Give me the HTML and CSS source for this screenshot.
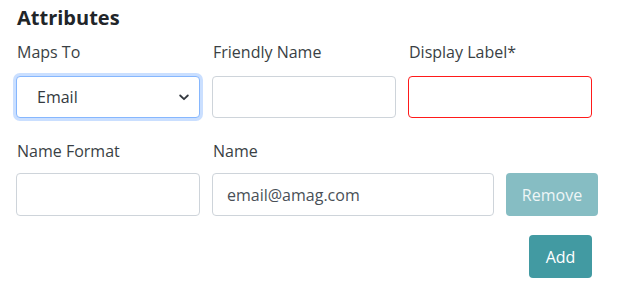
FILE: index.html
```html
<!DOCTYPE html>
<html lang="en">
<head>
  <meta charset="UTF-8">
  <title>Attributes</title>
  <link rel="stylesheet" href="styles.css">
</head>
<body>
  <div class="attributes">
    <h2 class="title">Attributes</h2>
    <div class="row row-top">
      <div class="field">
        <label>Maps To</label>
        <div class="select-wrap">
          <select class="control select focused">
            <option>Email</option>
          </select>
          <svg class="chevron" width="10" height="7" viewBox="0 0 10 7"><path d="M1.2 1.5 L5 5.2 L8.8 1.5" fill="none" stroke="#343a40" stroke-width="1.8" stroke-linecap="round" stroke-linejoin="round"/></svg>
        </div>
      </div>
      <div class="field">
        <label>Friendly Name</label>
        <input type="text" class="control">
      </div>
      <div class="field">
        <label>Display Label*</label>
        <input type="text" class="control invalid">
      </div>
    </div>
    <div class="row row-bottom">
      <div class="field fixed">
        <label>Name Format</label>
        <input type="text" class="control">
      </div>
      <div class="field grow">
        <label>Name</label>
        <input type="text" class="control" value="email@amag.com">
      </div>
      <button class="btn btn-remove">Remove</button>
    </div>
    <div class="actions">
      <button class="btn btn-add">Add</button>
    </div>
  </div>
</body>
</html>
```

FILE: styles.css
```css
body {
  margin: 0;
  padding: 0;
  background: #fff;
  font-family: 'Open Sans', sans-serif;
  color: #343a40;
}
.attributes {
  padding: 4px 0 0 16px;
  width: 582px;
}
.title {
  margin: 0 0 8px 1px;
  font-size: 20px;
  font-weight: 700;
  color: #212529;
  line-height: 28px;
}
.row {
  display: flex;
  gap: 12px;
  align-items: flex-end;
}
.row-top .field {
  width: 184px;
}
.row-top {
  margin-bottom: 21px;
}
.field {
  display: flex;
  flex-direction: column;
}
.field.fixed {
  width: 184px;
}
.field.grow {
  width: 282px;
}
.field label {
  font-size: 16px;
  line-height: 24px;
  margin: 0 0 12px 1px;
  color: #3a3f44;
}
.row-bottom .field label {
  margin-bottom: 10px;
}
.control {
  box-sizing: border-box;
  height: 42px;
  width: 100%;
  border: 1px solid #ced4da;
  border-radius: 4px;
  padding: 0 14px;
  font-family: 'Open Sans', sans-serif;
  font-size: 16px;
  color: #495057;
  background: #fff;
  outline: none;
}
.row-bottom .control {
  height: 43px;
}
.control.invalid {
  border-color: #ff1a1a;
}
.select-wrap {
  position: relative;
}
.select {
  appearance: none;
  -webkit-appearance: none;
  padding-left: 20px;
  color: #343a40;
}
.select.focused {
  border-color: #86b7fe;
  box-shadow: 0 0 0 3px rgba(13, 110, 253, 0.22);
}
.chevron {
  position: absolute;
  right: 11px;
  top: 18px;
}
.btn {
  box-sizing: border-box;
  border: none;
  border-radius: 4px;
  font-family: 'Open Sans', sans-serif;
  font-size: 16px;
  color: #fff;
  padding: 0;
}
.btn-remove {
  width: 92px;
  height: 43px;
  background: #86bdc3;
  color: #eef6f7;
}
.actions {
  display: flex;
  justify-content: flex-end;
  width: 576px;
  margin-top: 19px;
}
.btn-add {
  width: 63px;
  height: 43px;
  background: #429aa2;
}
```
